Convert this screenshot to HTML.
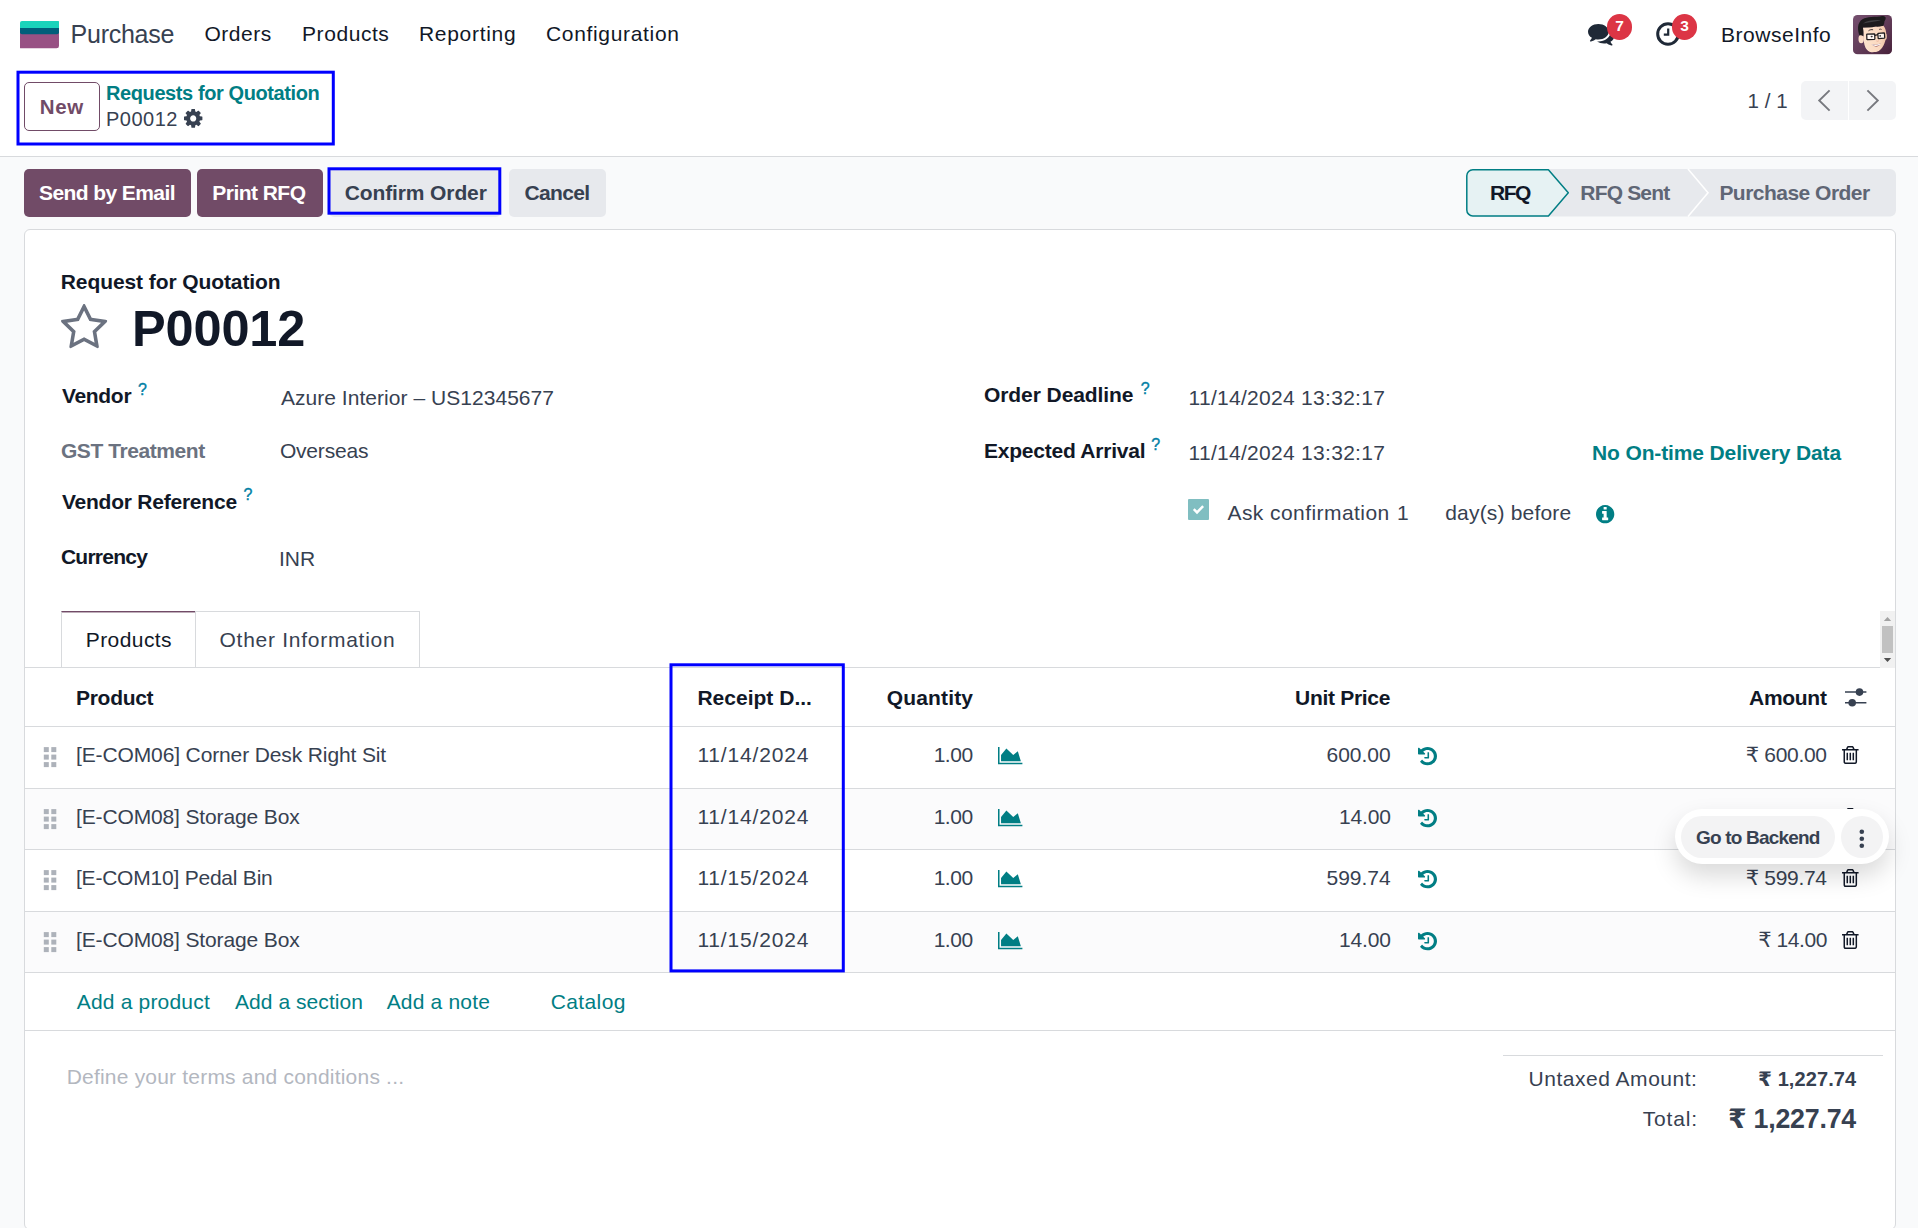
<!DOCTYPE html>
<html lang="en"><head><meta charset="utf-8"><title>Odoo - P00012</title>
<style>
html,body{margin:0;padding:0}
body{width:1918px;height:1228px;overflow:hidden;position:relative;background:#f9fafb;font-family:"Liberation Sans", "DejaVu Sans", sans-serif;font-size:21px;color:#374151}
.t{position:absolute;white-space:nowrap;line-height:1;z-index:5}
.i{position:absolute;z-index:4;overflow:visible}
.b{position:absolute;box-sizing:border-box}
</style></head><body>
<div class="b" style="left:0px;top:0px;width:1918.00px;height:156.00px;background:#fff;border-bottom:1px solid #d8dadd;height:157px;"></div>
<svg class="i" style="left:20px;top:20.700px" width="39" height="27.200" viewBox="0 0 39 27.200"><path d="M0 10h39v14.700a2.500 2.500 0 0 1-2.500 2.500H.5a.5.5 0 0 1-.5-.5z" fill="#985184"/><path d="M0 5h39v6.300a2 2 0 0 1-2 2H2a2 2 0 0 1-2-2z" fill="#005e7a"/><path d="M2 0h36.500a.5.5 0 0 1 .5.500V7H0V2a2 2 0 0 1 2-2z" fill="#1ad3bb"/></svg>
<svg class="i" style="left:1587.6px;top:24.3px;" width="26.40" height="21.40" viewBox="0 -1280 1792 1408.203066359433" preserveAspectRatio="none"><path fill="#1f2937" transform="scale(1,-1)" d="M1408 768C1408 1051 1093 1280 704 1280C315 1280 0 1051 0 768C0 606 104 461 266 367C232 284 188 245 149 201C138 188 125 176 129 157C129 157 129 157 129 157C132 140 146 128 161 128C162 128 163 128 164 128C194 132 223 137 250 144C351 170 445 213 528 272C584 262 643 256 704 256C1093 256 1408 485 1408 768ZM1792 512C1792 679 1682 827 1513 920C1528 871 1536 820 1536 768C1536 589 1444 424 1277 302C1122 190 919 128 704 128C675 128 645 130 616 132C741 50 907 0 1088 0C1149 0 1208 6 1264 16C1347 -43 1441 -86 1542 -112C1569 -119 1598 -124 1628 -128C1644 -130 1659 -117 1663 -99C1663 -99 1663 -99 1663 -99C1667 -80 1654 -68 1643 -55C1604 -11 1560 28 1526 111C1688 205 1792 349 1792 512Z"/></svg>
<svg class="i" style="left:1655.5px;top:22px" width="24" height="24" viewBox="0 0 24 24"><circle cx="12" cy="12" r="10.3" fill="none" stroke="#1f2937" stroke-width="3"/><path d="M12.2 6.5v6.2h-4.4" fill="none" stroke="#1f2937" stroke-width="2.2"/></svg>
<div class="b" style="left:1606.9px;top:14.4px;width:25.20px;height:25.20px;background:#dc3545;border-radius:50%;z-index:4;"></div>
<div class="b" style="left:1671.9px;top:14.4px;width:25.20px;height:25.20px;background:#dc3545;border-radius:50%;z-index:4;"></div>
<svg class="i" style="left:1853px;top:14.800px" width="39" height="39.400" viewBox="0 0 39 39.400">
<defs><linearGradient id="av" x1="0" y1="0" x2="1" y2="1"><stop offset="0" stop-color="#75506f"/><stop offset=".5" stop-color="#633d5a"/><stop offset="1" stop-color="#47213a"/></linearGradient>
<linearGradient id="sk" x1="0" y1="0" x2="1" y2="0"><stop offset="0" stop-color="#fde3cd"/><stop offset=".7" stop-color="#fbd9c0"/><stop offset="1" stop-color="#eec0a3"/></linearGradient>
<clipPath id="avc"><rect width="39" height="39.400" rx="4.500"/></clipPath></defs>
<g clip-path="url(#avc)"><rect width="39" height="39.400" fill="url(#av)"/>
<ellipse cx="8.200" cy="24" rx="2.700" ry="4.200" fill="#fbdcc6"/>
<ellipse cx="32.300" cy="21.500" rx="1.500" ry="3.200" fill="#f3cbb0"/>
<path d="M9.900 12.500L30.500 10.800C32.500 13.500 33.400 16.500 33.200 19.600 33.100 23 32.600 25.800 31.400 28.400 30.300 31.200 28.800 33.300 27 34.900 25.400 36.300 23.600 37 21.800 37.100 19.900 37.300 18.100 37.200 16.500 36.700 14.800 35.800 13.500 34.500 12.500 32.700 11.600 30.800 11.100 28.600 10.800 26.200z" fill="url(#sk)"/>
<path d="M5.050 12.100C5.300 8.500 7 5.600 9.450 4.200 12 2.800 15 2.200 18.200 2 22 1.700 26 2 29.200 1.100 30.200 .7 31.500 1.200 32.700 2.400 32.800 3.800 32.300 5.200 31.400 6.400 31.400 8 31 9.500 30.100 10.800 27.500 11.600 25 11.700 22.600 11.600 19.500 12.600 16.500 12.700 13.800 12.500 12.500 12.600 11.200 12.600 9.900 12.500 10.600 15.500 10.600 18.500 10.300 21.300 9.200 20.300 7.800 20 6.400 20.400 5.400 17.800 4.900 15 5.050 12.100z" fill="#1d1b1d"/>
<path d="M10 8.500C14 5.500 21 4.800 28 5.200 22 6.500 15 7.200 10 8.500z" fill="#4a4a4c" fill-opacity=".8"/>
<rect x="13.800" y="18.900" width="8" height="5.600" rx=".5" transform="rotate(-2 17.800 21.700)" fill="#fff" fill-opacity=".78" stroke="#1c1a1c" stroke-width="1.250"/>
<rect x="25" y="18.100" width="6.600" height="5.300" rx=".5" transform="rotate(-4 28.300 20.700)" fill="#fff" fill-opacity=".78" stroke="#1c1a1c" stroke-width="1.250"/>
<path d="M21.800 20.300L25 19.700" stroke="#1c1a1c" stroke-width="1.200"/>
<ellipse cx="18.700" cy="21.600" rx="1.050" ry=".8" fill="#3a3336"/><ellipse cx="27.200" cy="20.900" rx=".9" ry=".8" fill="#3a3336"/>
<path d="M15.500 15.800C17 14.600 18.700 14.400 20.100 14.800" fill="none" stroke="#2a2426" stroke-width=".9"/>
<path d="M26 14.600C27 14 27.800 14 28.600 14.500" fill="none" stroke="#2a2426" stroke-width=".8"/>
<path d="M23.400 25.900C24.200 26.500 25.300 26.300 25.900 25.600" fill="none" stroke="#e5a58f" stroke-width=".7"/>
<path d="M18.700 29.100C21.500 30.300 24.800 29.900 27.500 28.300 26.800 30.400 25.300 31.500 23.300 31.500 21.200 31.500 19.600 30.600 18.700 29.100z" fill="#7d3038"/>
<path d="M18.700 29.100C21.500 30.300 24.800 29.900 27.500 28.300 27.200 29.200 26.800 29.800 26.400 30.200 23.900 31.200 21.400 31.100 19.500 30.200 19.200 29.900 18.900 29.500 18.700 29.100z" fill="#fff"/>
</g></svg>
<svg class="i" style="left:0;top:0;z-index:7" width="1918" height="1228" viewBox="0 0 1918 1228"><rect x="18.00" y="72.20" width="315.30" height="71.80" fill="none" stroke="#0000ff" stroke-width="3"/></svg>
<div class="b" style="left:24px;top:82px;width:75.50px;height:48.50px;border:1px solid #714B67;border-radius:5px;background:#fff;"></div>
<svg class="i" style="left:183.8px;top:109px;" width="18.40" height="18.80" viewBox="0 -1408 1536 1536" preserveAspectRatio="none"><path fill="#374151" transform="scale(1,-1)" d="M1024 640C1024 499 909 384 768 384C627 384 512 499 512 640C512 781 627 896 768 896C909 896 1024 781 1024 640ZM1536 749C1536 766 1524 782 1507 785L1324 813C1314 846 1300 879 1283 911C1317 958 1354 1002 1388 1048C1393 1055 1396 1062 1396 1071C1396 1079 1394 1087 1389 1093C1347 1152 1277 1214 1224 1263C1217 1269 1208 1273 1199 1273C1190 1273 1181 1270 1175 1264L1033 1157C1004 1172 974 1184 943 1194L915 1378C913 1395 897 1408 879 1408H657C639 1408 625 1396 621 1380C605 1320 599 1255 592 1194C561 1184 530 1171 501 1156L363 1263C355 1269 346 1273 337 1273C303 1273 168 1127 144 1094C139 1087 135 1080 135 1071C135 1062 139 1054 145 1047C182 1002 218 957 252 909C236 879 223 849 213 817L27 789C12 786 0 768 0 753V531C0 514 12 498 29 495L212 468C222 434 236 401 253 369C219 322 182 278 148 232C143 225 140 218 140 209C140 201 142 193 147 186C189 128 259 66 312 18C319 11 328 7 337 7C346 7 355 10 362 16L503 123C532 108 562 96 593 86L621 -98C623 -115 639 -128 657 -128H879C897 -128 911 -116 915 -100C931 -40 937 25 944 86C975 96 1006 109 1035 124L1173 16C1181 11 1190 7 1199 7C1233 7 1368 154 1392 186C1398 193 1401 200 1401 209C1401 218 1397 227 1391 234C1354 279 1318 323 1284 372C1300 401 1312 431 1323 463L1508 491C1524 494 1536 512 1536 527Z"/></svg>
<div class="b" style="left:1800.8px;top:80.8px;width:95.20px;height:39.00px;background:#f3f4f6;border-radius:5px;"></div>
<div class="b" style="left:1848px;top:80.8px;width:1.00px;height:39.00px;background:#fff;"></div>
<svg class="i" style="left:1814px;top:88px" width="70" height="26" viewBox="1814 88 70 26"><path d="M1829.600 90.400l-10.400 10.100 10.400 10.100M1867.400 90.400l10.400 10.100-10.400 10.100" fill="none" stroke="#77797f" stroke-width="1.900"/></svg>
<div class="b" style="left:24px;top:169px;width:166.70px;height:47.80px;background:#714B67;border-radius:5px;"></div>
<div class="b" style="left:197px;top:169px;width:125.50px;height:47.80px;background:#714B67;border-radius:5px;"></div>
<div class="b" style="left:329px;top:169px;width:172.30px;height:47.80px;background:#e7e9ed;border-radius:5px;"></div>
<svg class="i" style="left:0;top:0;z-index:7" width="1918" height="1228" viewBox="0 0 1918 1228"><rect x="329.00" y="168.80" width="170.80" height="44.40" fill="none" stroke="#0000ff" stroke-width="3"/></svg>
<div class="b" style="left:508.8px;top:169px;width:96.80px;height:47.80px;background:#e7e9ed;border-radius:5px;"></div>
<svg class="i" style="left:1460px;top:165px" width="440" height="56" viewBox="1460 165 440 56">
<rect x="1480" y="169" width="416" height="47.600" rx="6" fill="#e7e9ed"/>
<path d="M1688 169l20 23.800-20 23.800" fill="none" stroke="#fff" stroke-width="1.600"/>
<path d="M1472.800 169.700H1548.400L1568.300 192.800 1548.400 215.900H1472.800a6 6 0 0 1-6-6V175.700a6 6 0 0 1 6-6z" fill="#e6f2f3" stroke="#017e84" stroke-width="1.500" stroke-linejoin="round"/>
</svg>
<div class="b" style="left:24px;top:229px;width:1872.00px;height:1001.00px;background:#fff;border:1px solid #d8dadd;border-radius:6px;"></div>
<svg class="i" style="left:61.3px;top:303.8px;" width="46.20" height="44.20" viewBox="0 -1504 1664 1587" preserveAspectRatio="none"><path fill="#6b7280" transform="scale(1,-1)" d="M1137 532 1209 111 832 310 454 111 527 532 221 829 643 891 832 1273 1021 891 1443 829ZM1664 889C1664 919 1632 931 1608 935L1106 1008L881 1463C872 1482 855 1504 832 1504C809 1504 792 1482 783 1463L558 1008L56 935C31 931 0 919 0 889C0 871 13 854 25 841L389 487L303 -13C302 -20 301 -26 301 -33C301 -59 314 -83 343 -83C357 -83 370 -78 383 -71L832 165L1281 -71C1293 -78 1307 -83 1321 -83C1350 -83 1362 -60 1362 -33C1362 -26 1362 -20 1361 -13L1275 487L1638 841C1651 854 1664 871 1664 889Z"/></svg>
<div class="b" style="left:1188px;top:499.3px;width:20.80px;height:20.70px;background:#80bec1;border-radius:1px;z-index:4;"><svg width="20.800" height="20.700" viewBox="0 0 21 21" style="position:absolute;left:0;top:0"><path d="M5.800 10.300l3.300 3.300 6.200-6.400" fill="none" stroke="#fff" stroke-width="2.500"/></svg></div>
<svg class="i" style="left:1595.5px;top:505px;" width="18.30" height="18.30" viewBox="0 -1408 1536 1536" preserveAspectRatio="none"><path fill="#017e84" transform="scale(1,-1)" d="M1024 160C1024 142 1010 128 992 128H544C526 128 512 142 512 160V320C512 338 526 352 544 352H640V672H544C526 672 512 686 512 704V864C512 882 526 896 544 896H864C882 896 896 882 896 864V352H992C1010 352 1024 338 1024 320V160ZM896 1056C896 1038 882 1024 864 1024H672C654 1024 640 1038 640 1056V1216C640 1234 654 1248 672 1248H864C882 1248 896 1234 896 1216V1056ZM1536 640C1536 1064 1192 1408 768 1408C344 1408 0 1064 0 640C0 216 344 -128 768 -128C1192 -128 1536 216 1536 640Z"/></svg>
<div class="b" style="left:61px;top:611px;width:134.50px;height:57.00px;border-left:1px solid #d8dadd;border-right:1px solid #d8dadd;border-top:1px solid #714B67;box-shadow:inset 0 1px 0 rgba(113,75,103,.45);background:#fff;"></div>
<div class="b" style="left:195px;top:611px;width:224.70px;height:57.00px;border-right:1px solid #d8dadd;border-top:1px solid #d8dadd;"></div>
<div class="b" style="left:25px;top:667px;width:1870.00px;height:1.00px;background:#d8dadd;z-index:3;"></div>
<div class="b" style="left:1880px;top:611px;width:15.00px;height:57.00px;background:#f1f1f1;z-index:4;"></div>
<div class="b" style="left:1882px;top:626px;width:11.00px;height:27.00px;background:#c1c1c1;z-index:5;"></div>
<svg class="i" style="left:1880px;top:611px;z-index:5" width="15" height="56" viewBox="0 0 15 56"><path d="M3.800 10.100h7.400l-3.700-4.200z" fill="#a3a3a3"/><path d="M3.800 46.900h7.400l-3.700 4.200z" fill="#505050"/></svg>
<div class="b" style="left:25px;top:788.5px;width:1870.00px;height:60.50px;background:#fbfbfc;z-index:1;"></div>
<div class="b" style="left:25px;top:912px;width:1870.00px;height:60.00px;background:#fbfbfc;z-index:1;"></div>
<div class="b" style="left:25px;top:726px;width:1870.00px;height:1.00px;background:#d8dadd;z-index:3;"></div>
<div class="b" style="left:25px;top:788px;width:1870.00px;height:1.00px;background:#d8dadd;z-index:3;"></div>
<div class="b" style="left:25px;top:849px;width:1870.00px;height:1.00px;background:#d8dadd;z-index:3;"></div>
<div class="b" style="left:25px;top:911px;width:1870.00px;height:1.00px;background:#d8dadd;z-index:3;"></div>
<div class="b" style="left:25px;top:972px;width:1870.00px;height:1.00px;background:#d8dadd;z-index:3;"></div>
<div class="b" style="left:25px;top:1030px;width:1870.00px;height:1.00px;background:#d8dadd;z-index:3;"></div>
<svg class="i" style="left:0;top:0;z-index:7" width="1918" height="1228" viewBox="0 0 1918 1228"><rect x="671.00" y="664.80" width="172.30" height="306.10" fill="none" stroke="#0000ff" stroke-width="3"/></svg>
<svg class="i" style="left:1845px;top:686px" width="23" height="23" viewBox="1845 686 23 23">
<path d="M1845 692.100h21.400M1845 702.800h21.400" stroke="#374151" stroke-width="1.500"/><circle cx="1859.500" cy="692.100" r="3.800" fill="#374151"/><circle cx="1852.200" cy="702.800" r="3.800" fill="#374151"/></svg>
<svg class="i" style="left:0;top:0" width="70" height="1228" viewBox="0 0 70 1228"><rect x="43.8" y="747.1" width="5" height="5" fill="#adb2ba"/><rect x="43.8" y="754.6" width="5" height="5" fill="#adb2ba"/><rect x="43.8" y="762.1" width="5" height="5" fill="#adb2ba"/><rect x="51.3" y="747.1" width="5" height="5" fill="#adb2ba"/><rect x="51.3" y="754.6" width="5" height="5" fill="#adb2ba"/><rect x="51.3" y="762.1" width="5" height="5" fill="#adb2ba"/></svg>
<svg class="i" style="left:997.7px;top:746.9px;" width="24.40" height="17.20" viewBox="0 -1408 2048 1536" preserveAspectRatio="none"><path fill="#017e84" transform="scale(1,-1)" d="M2048 0H128V1408H0V-128H2048ZM1664 1024 1280 704 704 1280 256 704V128H1920Z"/></svg>
<svg class="i" style="left:1418px;top:746.5px;" width="19.00" height="18.30" viewBox="0 -1408 1536 1536" preserveAspectRatio="none"><path fill="#017e84" transform="scale(1,-1)" d="M1536 640C1536 1063 1191 1408 768 1408C571 1408 380 1329 239 1196L109 1325C91 1344 63 1349 40 1339C16 1329 0 1306 0 1280V832C0 797 29 768 64 768H512C538 768 561 784 571 808C581 831 576 859 557 877L420 1015C513 1102 637 1152 768 1152C1050 1152 1280 922 1280 640C1280 358 1050 128 768 128C609 128 462 200 364 327C359 334 350 338 341 339C332 339 323 336 316 330L179 192C168 181 167 162 177 149C323 -27 539 -128 768 -128C1191 -128 1536 217 1536 640ZM896 928C896 946 882 960 864 960H800C782 960 768 946 768 928V576H544C526 576 512 562 512 544V480C512 462 526 448 544 448H864C882 448 896 462 896 480Z"/></svg>
<svg class="i" style="left:1842.2px;top:745.8px;" width="16.60" height="18.00" viewBox="0 -1408 1408 1536" preserveAspectRatio="none"><path fill="#111827" transform="scale(1,-1)" d="M512 800C512 818 498 832 480 832H416C398 832 384 818 384 800V224C384 206 398 192 416 192H480C498 192 512 206 512 224ZM768 800C768 818 754 832 736 832H672C654 832 640 818 640 800V224C640 206 654 192 672 192H736C754 192 768 206 768 224ZM1024 800C1024 818 1010 832 992 832H928C910 832 896 818 896 800V224C896 206 910 192 928 192H992C1010 192 1024 206 1024 224ZM1152 76C1152 28 1125 0 1120 0H288C283 0 256 28 256 76V1024H1152V76ZM480 1152 529 1269C532 1273 540 1279 546 1280H863C868 1279 877 1273 880 1269L928 1152ZM1408 1120C1408 1138 1394 1152 1376 1152H1067L997 1319C977 1368 917 1408 864 1408H544C491 1408 431 1368 411 1319L341 1152H32C14 1152 0 1138 0 1120V1056C0 1038 14 1024 32 1024H128V72C128 -38 200 -128 288 -128H1120C1208 -128 1280 -34 1280 76V1024H1376C1394 1024 1408 1038 1408 1056Z"/></svg>
<svg class="i" style="left:0;top:0" width="70" height="1228" viewBox="0 0 70 1228"><rect x="43.8" y="809.1" width="5" height="5" fill="#adb2ba"/><rect x="43.8" y="816.6" width="5" height="5" fill="#adb2ba"/><rect x="43.8" y="824.1" width="5" height="5" fill="#adb2ba"/><rect x="51.3" y="809.1" width="5" height="5" fill="#adb2ba"/><rect x="51.3" y="816.6" width="5" height="5" fill="#adb2ba"/><rect x="51.3" y="824.1" width="5" height="5" fill="#adb2ba"/></svg>
<svg class="i" style="left:997.7px;top:808.9px;" width="24.40" height="17.20" viewBox="0 -1408 2048 1536" preserveAspectRatio="none"><path fill="#017e84" transform="scale(1,-1)" d="M2048 0H128V1408H0V-128H2048ZM1664 1024 1280 704 704 1280 256 704V128H1920Z"/></svg>
<svg class="i" style="left:1418px;top:808.5px;" width="19.00" height="18.30" viewBox="0 -1408 1536 1536" preserveAspectRatio="none"><path fill="#017e84" transform="scale(1,-1)" d="M1536 640C1536 1063 1191 1408 768 1408C571 1408 380 1329 239 1196L109 1325C91 1344 63 1349 40 1339C16 1329 0 1306 0 1280V832C0 797 29 768 64 768H512C538 768 561 784 571 808C581 831 576 859 557 877L420 1015C513 1102 637 1152 768 1152C1050 1152 1280 922 1280 640C1280 358 1050 128 768 128C609 128 462 200 364 327C359 334 350 338 341 339C332 339 323 336 316 330L179 192C168 181 167 162 177 149C323 -27 539 -128 768 -128C1191 -128 1536 217 1536 640ZM896 928C896 946 882 960 864 960H800C782 960 768 946 768 928V576H544C526 576 512 562 512 544V480C512 462 526 448 544 448H864C882 448 896 462 896 480Z"/></svg>
<svg class="i" style="left:1842.2px;top:807.8px;" width="16.60" height="18.00" viewBox="0 -1408 1408 1536" preserveAspectRatio="none"><path fill="#111827" transform="scale(1,-1)" d="M512 800C512 818 498 832 480 832H416C398 832 384 818 384 800V224C384 206 398 192 416 192H480C498 192 512 206 512 224ZM768 800C768 818 754 832 736 832H672C654 832 640 818 640 800V224C640 206 654 192 672 192H736C754 192 768 206 768 224ZM1024 800C1024 818 1010 832 992 832H928C910 832 896 818 896 800V224C896 206 910 192 928 192H992C1010 192 1024 206 1024 224ZM1152 76C1152 28 1125 0 1120 0H288C283 0 256 28 256 76V1024H1152V76ZM480 1152 529 1269C532 1273 540 1279 546 1280H863C868 1279 877 1273 880 1269L928 1152ZM1408 1120C1408 1138 1394 1152 1376 1152H1067L997 1319C977 1368 917 1408 864 1408H544C491 1408 431 1368 411 1319L341 1152H32C14 1152 0 1138 0 1120V1056C0 1038 14 1024 32 1024H128V72C128 -38 200 -128 288 -128H1120C1208 -128 1280 -34 1280 76V1024H1376C1394 1024 1408 1038 1408 1056Z"/></svg>
<svg class="i" style="left:0;top:0" width="70" height="1228" viewBox="0 0 70 1228"><rect x="43.8" y="870.1" width="5" height="5" fill="#adb2ba"/><rect x="43.8" y="877.6" width="5" height="5" fill="#adb2ba"/><rect x="43.8" y="885.1" width="5" height="5" fill="#adb2ba"/><rect x="51.3" y="870.1" width="5" height="5" fill="#adb2ba"/><rect x="51.3" y="877.6" width="5" height="5" fill="#adb2ba"/><rect x="51.3" y="885.1" width="5" height="5" fill="#adb2ba"/></svg>
<svg class="i" style="left:997.7px;top:869.9px;" width="24.40" height="17.20" viewBox="0 -1408 2048 1536" preserveAspectRatio="none"><path fill="#017e84" transform="scale(1,-1)" d="M2048 0H128V1408H0V-128H2048ZM1664 1024 1280 704 704 1280 256 704V128H1920Z"/></svg>
<svg class="i" style="left:1418px;top:869.5px;" width="19.00" height="18.30" viewBox="0 -1408 1536 1536" preserveAspectRatio="none"><path fill="#017e84" transform="scale(1,-1)" d="M1536 640C1536 1063 1191 1408 768 1408C571 1408 380 1329 239 1196L109 1325C91 1344 63 1349 40 1339C16 1329 0 1306 0 1280V832C0 797 29 768 64 768H512C538 768 561 784 571 808C581 831 576 859 557 877L420 1015C513 1102 637 1152 768 1152C1050 1152 1280 922 1280 640C1280 358 1050 128 768 128C609 128 462 200 364 327C359 334 350 338 341 339C332 339 323 336 316 330L179 192C168 181 167 162 177 149C323 -27 539 -128 768 -128C1191 -128 1536 217 1536 640ZM896 928C896 946 882 960 864 960H800C782 960 768 946 768 928V576H544C526 576 512 562 512 544V480C512 462 526 448 544 448H864C882 448 896 462 896 480Z"/></svg>
<svg class="i" style="left:1842.2px;top:868.8px;" width="16.60" height="18.00" viewBox="0 -1408 1408 1536" preserveAspectRatio="none"><path fill="#111827" transform="scale(1,-1)" d="M512 800C512 818 498 832 480 832H416C398 832 384 818 384 800V224C384 206 398 192 416 192H480C498 192 512 206 512 224ZM768 800C768 818 754 832 736 832H672C654 832 640 818 640 800V224C640 206 654 192 672 192H736C754 192 768 206 768 224ZM1024 800C1024 818 1010 832 992 832H928C910 832 896 818 896 800V224C896 206 910 192 928 192H992C1010 192 1024 206 1024 224ZM1152 76C1152 28 1125 0 1120 0H288C283 0 256 28 256 76V1024H1152V76ZM480 1152 529 1269C532 1273 540 1279 546 1280H863C868 1279 877 1273 880 1269L928 1152ZM1408 1120C1408 1138 1394 1152 1376 1152H1067L997 1319C977 1368 917 1408 864 1408H544C491 1408 431 1368 411 1319L341 1152H32C14 1152 0 1138 0 1120V1056C0 1038 14 1024 32 1024H128V72C128 -38 200 -128 288 -128H1120C1208 -128 1280 -34 1280 76V1024H1376C1394 1024 1408 1038 1408 1056Z"/></svg>
<svg class="i" style="left:0;top:0" width="70" height="1228" viewBox="0 0 70 1228"><rect x="43.8" y="932.1" width="5" height="5" fill="#adb2ba"/><rect x="43.8" y="939.6" width="5" height="5" fill="#adb2ba"/><rect x="43.8" y="947.1" width="5" height="5" fill="#adb2ba"/><rect x="51.3" y="932.1" width="5" height="5" fill="#adb2ba"/><rect x="51.3" y="939.6" width="5" height="5" fill="#adb2ba"/><rect x="51.3" y="947.1" width="5" height="5" fill="#adb2ba"/></svg>
<svg class="i" style="left:997.7px;top:931.9px;" width="24.40" height="17.20" viewBox="0 -1408 2048 1536" preserveAspectRatio="none"><path fill="#017e84" transform="scale(1,-1)" d="M2048 0H128V1408H0V-128H2048ZM1664 1024 1280 704 704 1280 256 704V128H1920Z"/></svg>
<svg class="i" style="left:1418px;top:931.5px;" width="19.00" height="18.30" viewBox="0 -1408 1536 1536" preserveAspectRatio="none"><path fill="#017e84" transform="scale(1,-1)" d="M1536 640C1536 1063 1191 1408 768 1408C571 1408 380 1329 239 1196L109 1325C91 1344 63 1349 40 1339C16 1329 0 1306 0 1280V832C0 797 29 768 64 768H512C538 768 561 784 571 808C581 831 576 859 557 877L420 1015C513 1102 637 1152 768 1152C1050 1152 1280 922 1280 640C1280 358 1050 128 768 128C609 128 462 200 364 327C359 334 350 338 341 339C332 339 323 336 316 330L179 192C168 181 167 162 177 149C323 -27 539 -128 768 -128C1191 -128 1536 217 1536 640ZM896 928C896 946 882 960 864 960H800C782 960 768 946 768 928V576H544C526 576 512 562 512 544V480C512 462 526 448 544 448H864C882 448 896 462 896 480Z"/></svg>
<svg class="i" style="left:1842.2px;top:930.8px;" width="16.60" height="18.00" viewBox="0 -1408 1408 1536" preserveAspectRatio="none"><path fill="#111827" transform="scale(1,-1)" d="M512 800C512 818 498 832 480 832H416C398 832 384 818 384 800V224C384 206 398 192 416 192H480C498 192 512 206 512 224ZM768 800C768 818 754 832 736 832H672C654 832 640 818 640 800V224C640 206 654 192 672 192H736C754 192 768 206 768 224ZM1024 800C1024 818 1010 832 992 832H928C910 832 896 818 896 800V224C896 206 910 192 928 192H992C1010 192 1024 206 1024 224ZM1152 76C1152 28 1125 0 1120 0H288C283 0 256 28 256 76V1024H1152V76ZM480 1152 529 1269C532 1273 540 1279 546 1280H863C868 1279 877 1273 880 1269L928 1152ZM1408 1120C1408 1138 1394 1152 1376 1152H1067L997 1319C977 1368 917 1408 864 1408H544C491 1408 431 1368 411 1319L341 1152H32C14 1152 0 1138 0 1120V1056C0 1038 14 1024 32 1024H128V72C128 -38 200 -128 288 -128H1120C1208 -128 1280 -34 1280 76V1024H1376C1394 1024 1408 1038 1408 1056Z"/></svg>
<div class="b" style="left:1502.8px;top:1055px;width:380.20px;height:1.00px;background:#d8dadd;"></div>
<div class="b" style="left:1675px;top:809.2px;width:214.40px;height:55.20px;background:#fff;border-radius:28px;box-shadow:0 12px 24px rgba(0,0,0,.15);z-index:20;"></div>
<div class="b" style="left:1680.9px;top:815.8px;width:154.00px;height:42.10px;background:#f3f3f4;border-radius:21px;z-index:21;"></div>
<div class="b" style="left:1841px;top:815.8px;width:42.30px;height:42.10px;background:#f3f3f4;border-radius:50%;z-index:21;"></div>
<svg class="i" style="left:1855px;top:826px;z-index:22" width="14" height="26" viewBox="1855 826 14 26"><circle cx="1861.800" cy="831.800" r="2.300" fill="#374151"/><circle cx="1861.800" cy="838.800" r="2.300" fill="#374151"/><circle cx="1861.800" cy="845.800" r="2.300" fill="#374151"/></svg>
<header>
<nav aria-label="Main menu">
<span class="t" style="left:70.60px;top:22px;font-size:25px;color:#374151;letter-spacing:-0.257px;">Purchase</span>
<span class="t" style="left:204.50px;top:23px;font-size:21px;color:#111827;letter-spacing:0.500px;">Orders</span>
<span class="t" style="left:302.00px;top:23px;font-size:21px;color:#111827;letter-spacing:0.571px;">Products</span>
<span class="t" style="left:419.00px;top:23px;font-size:21px;color:#111827;letter-spacing:0.688px;">Reporting</span>
<span class="t" style="left:546.00px;top:23px;font-size:21px;color:#111827;letter-spacing:0.667px;">Configuration</span>
<span class="t" style="left:1721.00px;top:24px;font-size:21px;color:#111827;letter-spacing:0.522px;">BrowseInfo</span>
<span class="t" style="left:1615.30px;top:18px;font-size:15.5px;color:#fff;font-weight:700;">7</span>
<span class="t" style="left:1680.30px;top:18px;font-size:15.5px;color:#fff;font-weight:700;">3</span>
</nav>
<div class="o_control_panel" aria-label="Breadcrumb">
<span class="t" style="left:39.75px;top:97px;font-size:20.5px;color:#714B67;font-weight:700;letter-spacing:0.625px;">New</span>
<span class="t" style="left:106.00px;top:83px;font-size:20px;color:#017e84;font-weight:700;letter-spacing:-0.405px;">Requests for Quotation</span>
<span class="t" style="left:106.00px;top:109px;font-size:20px;color:#374151;letter-spacing:0.500px;">P00012</span>
<span class="t" style="left:1747.50px;top:91px;font-size:20.5px;color:#374151;letter-spacing:0.075px;">1 / 1</span>
</div>
<div class="o_statusbar_buttons" aria-label="Actions">
<span class="t" style="left:39.00px;top:182px;font-size:21px;color:#fff;font-weight:700;letter-spacing:-0.583px;">Send by Email</span>
<span class="t" style="left:212.30px;top:182px;font-size:21px;color:#fff;font-weight:700;letter-spacing:-0.538px;">Print RFQ</span>
<span class="t" style="left:344.80px;top:182px;font-size:21px;color:#374151;font-weight:700;letter-spacing:-0.125px;">Confirm Order</span>
<span class="t" style="left:524.50px;top:182px;font-size:21px;color:#374151;font-weight:700;letter-spacing:-0.660px;">Cancel</span>
</div>
<div class="o_statusbar_status" aria-label="Status">
<span class="t" style="left:1490.00px;top:182px;font-size:21px;color:#111827;font-weight:700;letter-spacing:-1.500px;">RFQ</span>
<span class="t" style="left:1580.30px;top:182px;font-size:21px;color:#5f6675;font-weight:700;letter-spacing:-0.829px;">RFQ Sent</span>
<span class="t" style="left:1719.40px;top:182px;font-size:21px;color:#5f6675;font-weight:700;letter-spacing:-0.523px;">Purchase Order</span>
</div>
</header>
<main>
<section aria-label="Title">
<span class="t" style="left:60.75px;top:271px;font-size:21px;color:#111827;font-weight:700;letter-spacing:-0.087px;">Request for Quotation</span>
<span class="t" style="left:132.00px;top:304px;font-size:50.5px;color:#111827;font-weight:700;letter-spacing:-0.150px;">P00012</span>
</section>
<section aria-label="Vendor details">
<span class="t" style="left:61.90px;top:385px;font-size:21px;color:#111827;font-weight:700;letter-spacing:-0.300px;">Vendor</span>
<span class="t" style="left:138.00px;top:382px;font-size:16px;color:#0180a5;-webkit-text-stroke:.35px #0180a5;">?</span>
<span class="t" style="left:280.90px;top:387px;font-size:21px;color:#374151;letter-spacing:0.042px;">Azure Interior – US12345677</span>
<span class="t" style="left:60.90px;top:440px;font-size:21px;color:#6b7280;font-weight:700;letter-spacing:-0.425px;">GST Treatment</span>
<span class="t" style="left:279.90px;top:440px;font-size:21px;color:#374151;letter-spacing:-0.186px;">Overseas</span>
<span class="t" style="left:61.90px;top:491px;font-size:21px;color:#111827;font-weight:700;letter-spacing:-0.227px;">Vendor Reference</span>
<span class="t" style="left:243.50px;top:487px;font-size:16px;color:#0180a5;-webkit-text-stroke:.35px #0180a5;">?</span>
<span class="t" style="left:60.90px;top:546px;font-size:21px;color:#111827;font-weight:700;letter-spacing:-0.743px;">Currency</span>
<span class="t" style="left:278.90px;top:548px;font-size:21px;color:#374151;">INR</span>
</section>
<section aria-label="Dates">
<span class="t" style="left:984.00px;top:384px;font-size:21px;color:#111827;font-weight:700;letter-spacing:-0.077px;">Order Deadline</span>
<span class="t" style="left:1140.75px;top:381px;font-size:16px;color:#0180a5;-webkit-text-stroke:.35px #0180a5;">?</span>
<span class="t" style="left:1188.50px;top:387px;font-size:21px;color:#374151;letter-spacing:0.292px;">11/14/2024 13:32:17</span>
<span class="t" style="left:984.00px;top:440px;font-size:21px;color:#111827;font-weight:700;letter-spacing:-0.233px;">Expected Arrival</span>
<span class="t" style="left:1151.25px;top:437px;font-size:16px;color:#0180a5;-webkit-text-stroke:.35px #0180a5;">?</span>
<span class="t" style="left:1188.50px;top:442px;font-size:21px;color:#374151;letter-spacing:0.292px;">11/14/2024 13:32:17</span>
<span class="t" style="left:1592.00px;top:442px;font-size:21px;color:#017e84;font-weight:700;letter-spacing:-0.130px;">No On-time Delivery Data</span>
<span class="t" style="left:1227.50px;top:502px;font-size:21px;color:#374151;letter-spacing:0.433px;">Ask confirmation</span>
<span class="t" style="left:1397.00px;top:502px;font-size:21px;color:#374151;">1</span>
<span class="t" style="left:1445.25px;top:502px;font-size:21px;color:#374151;letter-spacing:0.188px;">day(s) before</span>
</section>
<div role="tablist">
<span class="t" style="left:85.75px;top:629px;font-size:21px;color:#111827;letter-spacing:0.429px;">Products</span>
<span class="t" style="left:219.50px;top:629px;font-size:21px;color:#374151;letter-spacing:0.734px;">Other Information</span>
</div>
<div role="row" aria-label="Columns">
<span class="t" style="left:76.00px;top:687px;font-size:21px;color:#111827;font-weight:700;letter-spacing:-0.292px;">Product</span>
<span class="t" style="left:697.40px;top:687px;font-size:21px;color:#111827;font-weight:700;letter-spacing:0.018px;">Receipt D...</span>
<span class="t" style="left:886.70px;top:687px;font-size:21px;color:#111827;font-weight:700;letter-spacing:0.157px;">Quantity</span>
<span class="t" style="left:1295.00px;top:687px;font-size:21px;color:#111827;font-weight:700;letter-spacing:-0.289px;">Unit Price</span>
<span class="t" style="left:1749.00px;top:687px;font-size:21px;color:#111827;font-weight:700;letter-spacing:-0.280px;">Amount</span>
</div>
<div role="rowgroup" aria-label="Order lines">
<span class="t" style="left:76.00px;top:744px;font-size:21px;color:#374151;letter-spacing:-0.125px;">[E-COM06] Corner Desk Right Sit</span>
<span class="t" style="left:697.40px;top:744px;font-size:21px;color:#374151;letter-spacing:0.833px;">11/14/2024</span>
<span class="t" style="left:933.70px;top:744px;font-size:21px;color:#374151;letter-spacing:-0.500px;">1.00</span>
<span class="t" style="left:1326.60px;top:744px;font-size:21px;color:#374151;letter-spacing:-0.040px;">600.00</span>
<span class="t" style="left:1745.70px;top:744px;font-size:21px;color:#374151;letter-spacing:-0.300px;">₹ 600.00</span>
<span class="t" style="left:76.00px;top:806px;font-size:21px;color:#374151;letter-spacing:-0.138px;">[E-COM08] Storage Box</span>
<span class="t" style="left:697.40px;top:806px;font-size:21px;color:#374151;letter-spacing:0.833px;">11/14/2024</span>
<span class="t" style="left:933.70px;top:806px;font-size:21px;color:#374151;letter-spacing:-0.500px;">1.00</span>
<span class="t" style="left:1339.00px;top:806px;font-size:21px;color:#374151;letter-spacing:-0.150px;">14.00</span>
<span class="t" style="left:1758.30px;top:806px;font-size:21px;color:#374151;letter-spacing:-0.450px;clip-path:inset(5px 0 0 0);">₹ 14.00</span>
<span class="t" style="left:76.00px;top:867px;font-size:21px;color:#374151;letter-spacing:-0.222px;">[E-COM10] Pedal Bin</span>
<span class="t" style="left:697.40px;top:867px;font-size:21px;color:#374151;letter-spacing:0.833px;">11/15/2024</span>
<span class="t" style="left:933.70px;top:867px;font-size:21px;color:#374151;letter-spacing:-0.500px;">1.00</span>
<span class="t" style="left:1326.60px;top:867px;font-size:21px;color:#374151;letter-spacing:-0.040px;">599.74</span>
<span class="t" style="left:1745.70px;top:867px;font-size:21px;color:#374151;letter-spacing:-0.300px;">₹ 599.74</span>
<span class="t" style="left:76.00px;top:929px;font-size:21px;color:#374151;letter-spacing:-0.138px;">[E-COM08] Storage Box</span>
<span class="t" style="left:697.40px;top:929px;font-size:21px;color:#374151;letter-spacing:0.833px;">11/15/2024</span>
<span class="t" style="left:933.70px;top:929px;font-size:21px;color:#374151;letter-spacing:-0.500px;">1.00</span>
<span class="t" style="left:1339.00px;top:929px;font-size:21px;color:#374151;letter-spacing:-0.150px;">14.00</span>
<span class="t" style="left:1758.30px;top:929px;font-size:21px;color:#374151;letter-spacing:-0.450px;">₹ 14.00</span>
</div>
<div aria-label="Add lines">
<span class="t" style="left:76.70px;top:991px;font-size:21px;color:#017e84;letter-spacing:0.192px;">Add a product</span>
<span class="t" style="left:235.00px;top:991px;font-size:21px;color:#017e84;letter-spacing:0.058px;">Add a section</span>
<span class="t" style="left:386.70px;top:991px;font-size:21px;color:#017e84;letter-spacing:0.178px;">Add a note</span>
<span class="t" style="left:550.70px;top:991px;font-size:21px;color:#017e84;letter-spacing:0.383px;">Catalog</span>
<span class="t" style="left:66.70px;top:1066px;font-size:21px;color:#b3b7bf;letter-spacing:0.200px;">Define your terms and conditions ...</span>
</div>
<section aria-label="Totals">
<span class="t" style="left:1528.60px;top:1068px;font-size:21px;color:#374151;letter-spacing:0.514px;">Untaxed Amount:</span>
<span class="t" style="left:1758.00px;top:1069px;font-size:20px;color:#374151;font-weight:700;letter-spacing:0.089px;">₹ 1,227.74</span>
<span class="t" style="left:1642.80px;top:1108px;font-size:21px;color:#374151;letter-spacing:0.800px;">Total:</span>
<span class="t" style="left:1728.00px;top:1106px;font-size:26.8px;color:#374151;font-weight:700;letter-spacing:-0.244px;">₹ 1,227.74</span>
</section>
<aside aria-label="Backend shortcut">
<span class="t" style="left:1696.00px;top:828px;font-size:19px;color:#374151;font-weight:700;letter-spacing:-0.800px;z-index:30;">Go to Backend</span>
</aside>
</main>
</body></html>
